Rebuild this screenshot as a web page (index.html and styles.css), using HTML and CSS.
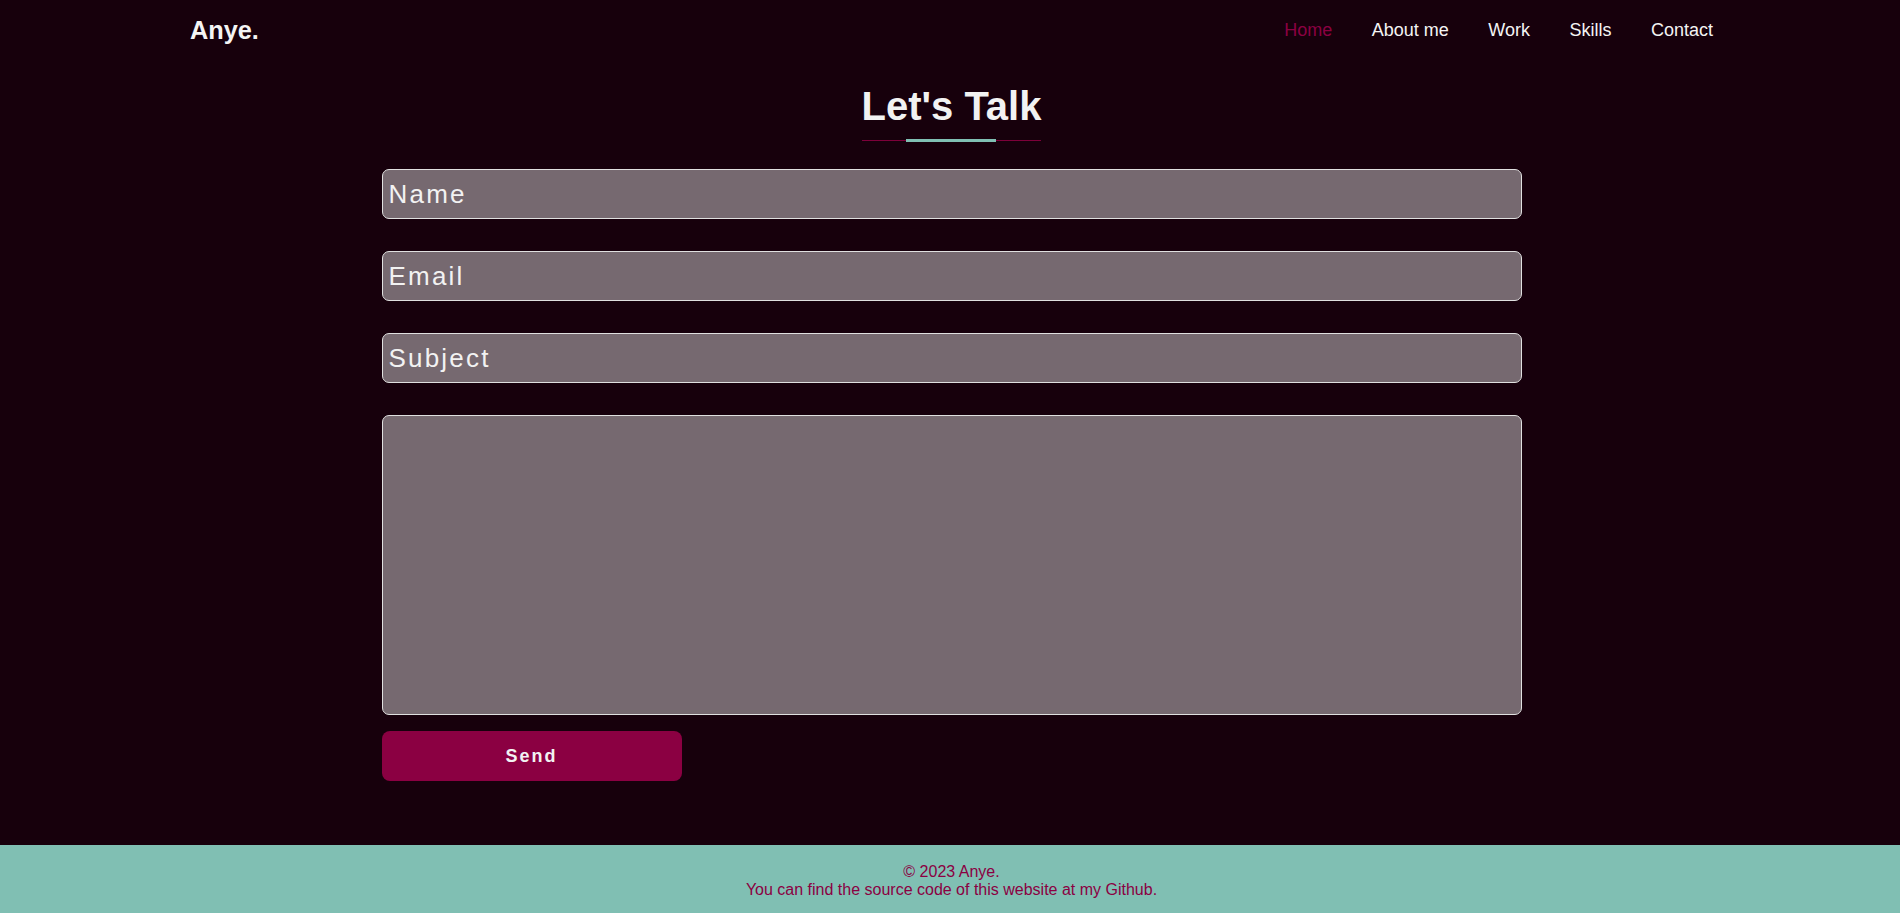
FILE: index.html
```html
<!DOCTYPE html>
<html lang="en">
<head>
<meta charset="UTF-8">
<title>Anye. - Contact</title>
<link rel="stylesheet" href="styles.css">
</head>
<body>
<header class="site-header">
  <a class="logo" href="#">Anye.</a>
  <nav class="nav">
    <a class="nav-link active" href="#">Home</a>
    <a class="nav-link" href="#">About me</a>
    <a class="nav-link" href="#">Work</a>
    <a class="nav-link" href="#">Skills</a>
    <a class="nav-link" href="#">Contact</a>
  </nav>
</header>
<main class="contact">
  <h2 class="section-title">Let's Talk</h2>
  <form class="contact-form">
    <input class="field" type="text" placeholder="Name">
    <input class="field" type="email" placeholder="Email">
    <input class="field" type="text" placeholder="Subject">
    <textarea class="field message"></textarea>
    <button class="send" type="button">Send</button>
  </form>
</main>
<footer class="site-footer">
  <p class="footer-line">© 2023 Anye.</p>
  <p class="footer-line">You can find the source code of this website at my Github.</p>
</footer>
</body>
</html>
```
FILE: styles.css
```css
* {
  box-sizing: border-box;
}

html, body {
  margin: 0;
  padding: 0;
}

body {
  min-height: 100vh;
  display: flex;
  flex-direction: column;
  background: #17000c;
  color: #f2f2f2;
  font-family: "Liberation Sans", Arial, sans-serif;
}

.site-header {
  height: 60px;
  display: flex;
  align-items: center;
  justify-content: space-between;
  padding: 0 187px 0 190px;
}

.logo {
  font-size: 25.3px;
  font-weight: bold;
  color: #f4f4f4;
  text-decoration: none;
}

.nav {
  display: flex;
  gap: 39.5px;
}

.nav-link {
  font-size: 18px;
  color: #f4f4f4;
  text-decoration: none;
}

.nav-link.active {
  color: #8b0042;
}

.contact {
  flex: 1;
  display: flex;
  flex-direction: column;
  align-items: center;
  padding-left: 3px;
}

.section-title {
  position: relative;
  display: inline-block;
  margin: 24px 0 28px;
  padding-bottom: 11px;
  border-bottom: 1px solid #7d003a;
  font-size: 40px;
  font-weight: bold;
  color: #f2f2f2;
}

.section-title::after {
  content: "";
  position: absolute;
  left: 50%;
  bottom: -2px;
  width: 90px;
  height: 3px;
  margin-left: -45px;
  background: #80bfb3;
}

.contact-form {
  width: 1140px;
  display: flex;
  flex-direction: column;
  align-items: flex-start;
}

.field {
  width: 100%;
  height: 50px;
  margin: 0 0 32px;
  padding: 0 6px;
  border: 1px solid #e0e0e0;
  border-radius: 7px;
  background: #766970;
  color: #f2f2f2;
  font-family: "Liberation Sans", Arial, sans-serif;
  font-size: 26px;
  letter-spacing: 2.2px;
  outline: none;
}

.field::placeholder {
  color: #f2f2f2;
  opacity: 1;
}

.message {
  height: 300px;
  margin-bottom: 16px;
  padding: 6px;
  resize: none;
}

.send {
  width: 300px;
  height: 50px;
  border: none;
  border-radius: 8px;
  background: #8b0042;
  color: #f2f2f2;
  font-family: "Liberation Sans", Arial, sans-serif;
  font-size: 18px;
  font-weight: bold;
  letter-spacing: 2px;
  cursor: pointer;
}

.site-footer {
  height: 68px;
  padding: 18px 0 15px 3px;
  background: #80bfb3;
  color: #8b0042;
  text-align: center;
  font-size: 16px;
  line-height: 17.5px;
}

.footer-line {
  margin: 0;
}
```
